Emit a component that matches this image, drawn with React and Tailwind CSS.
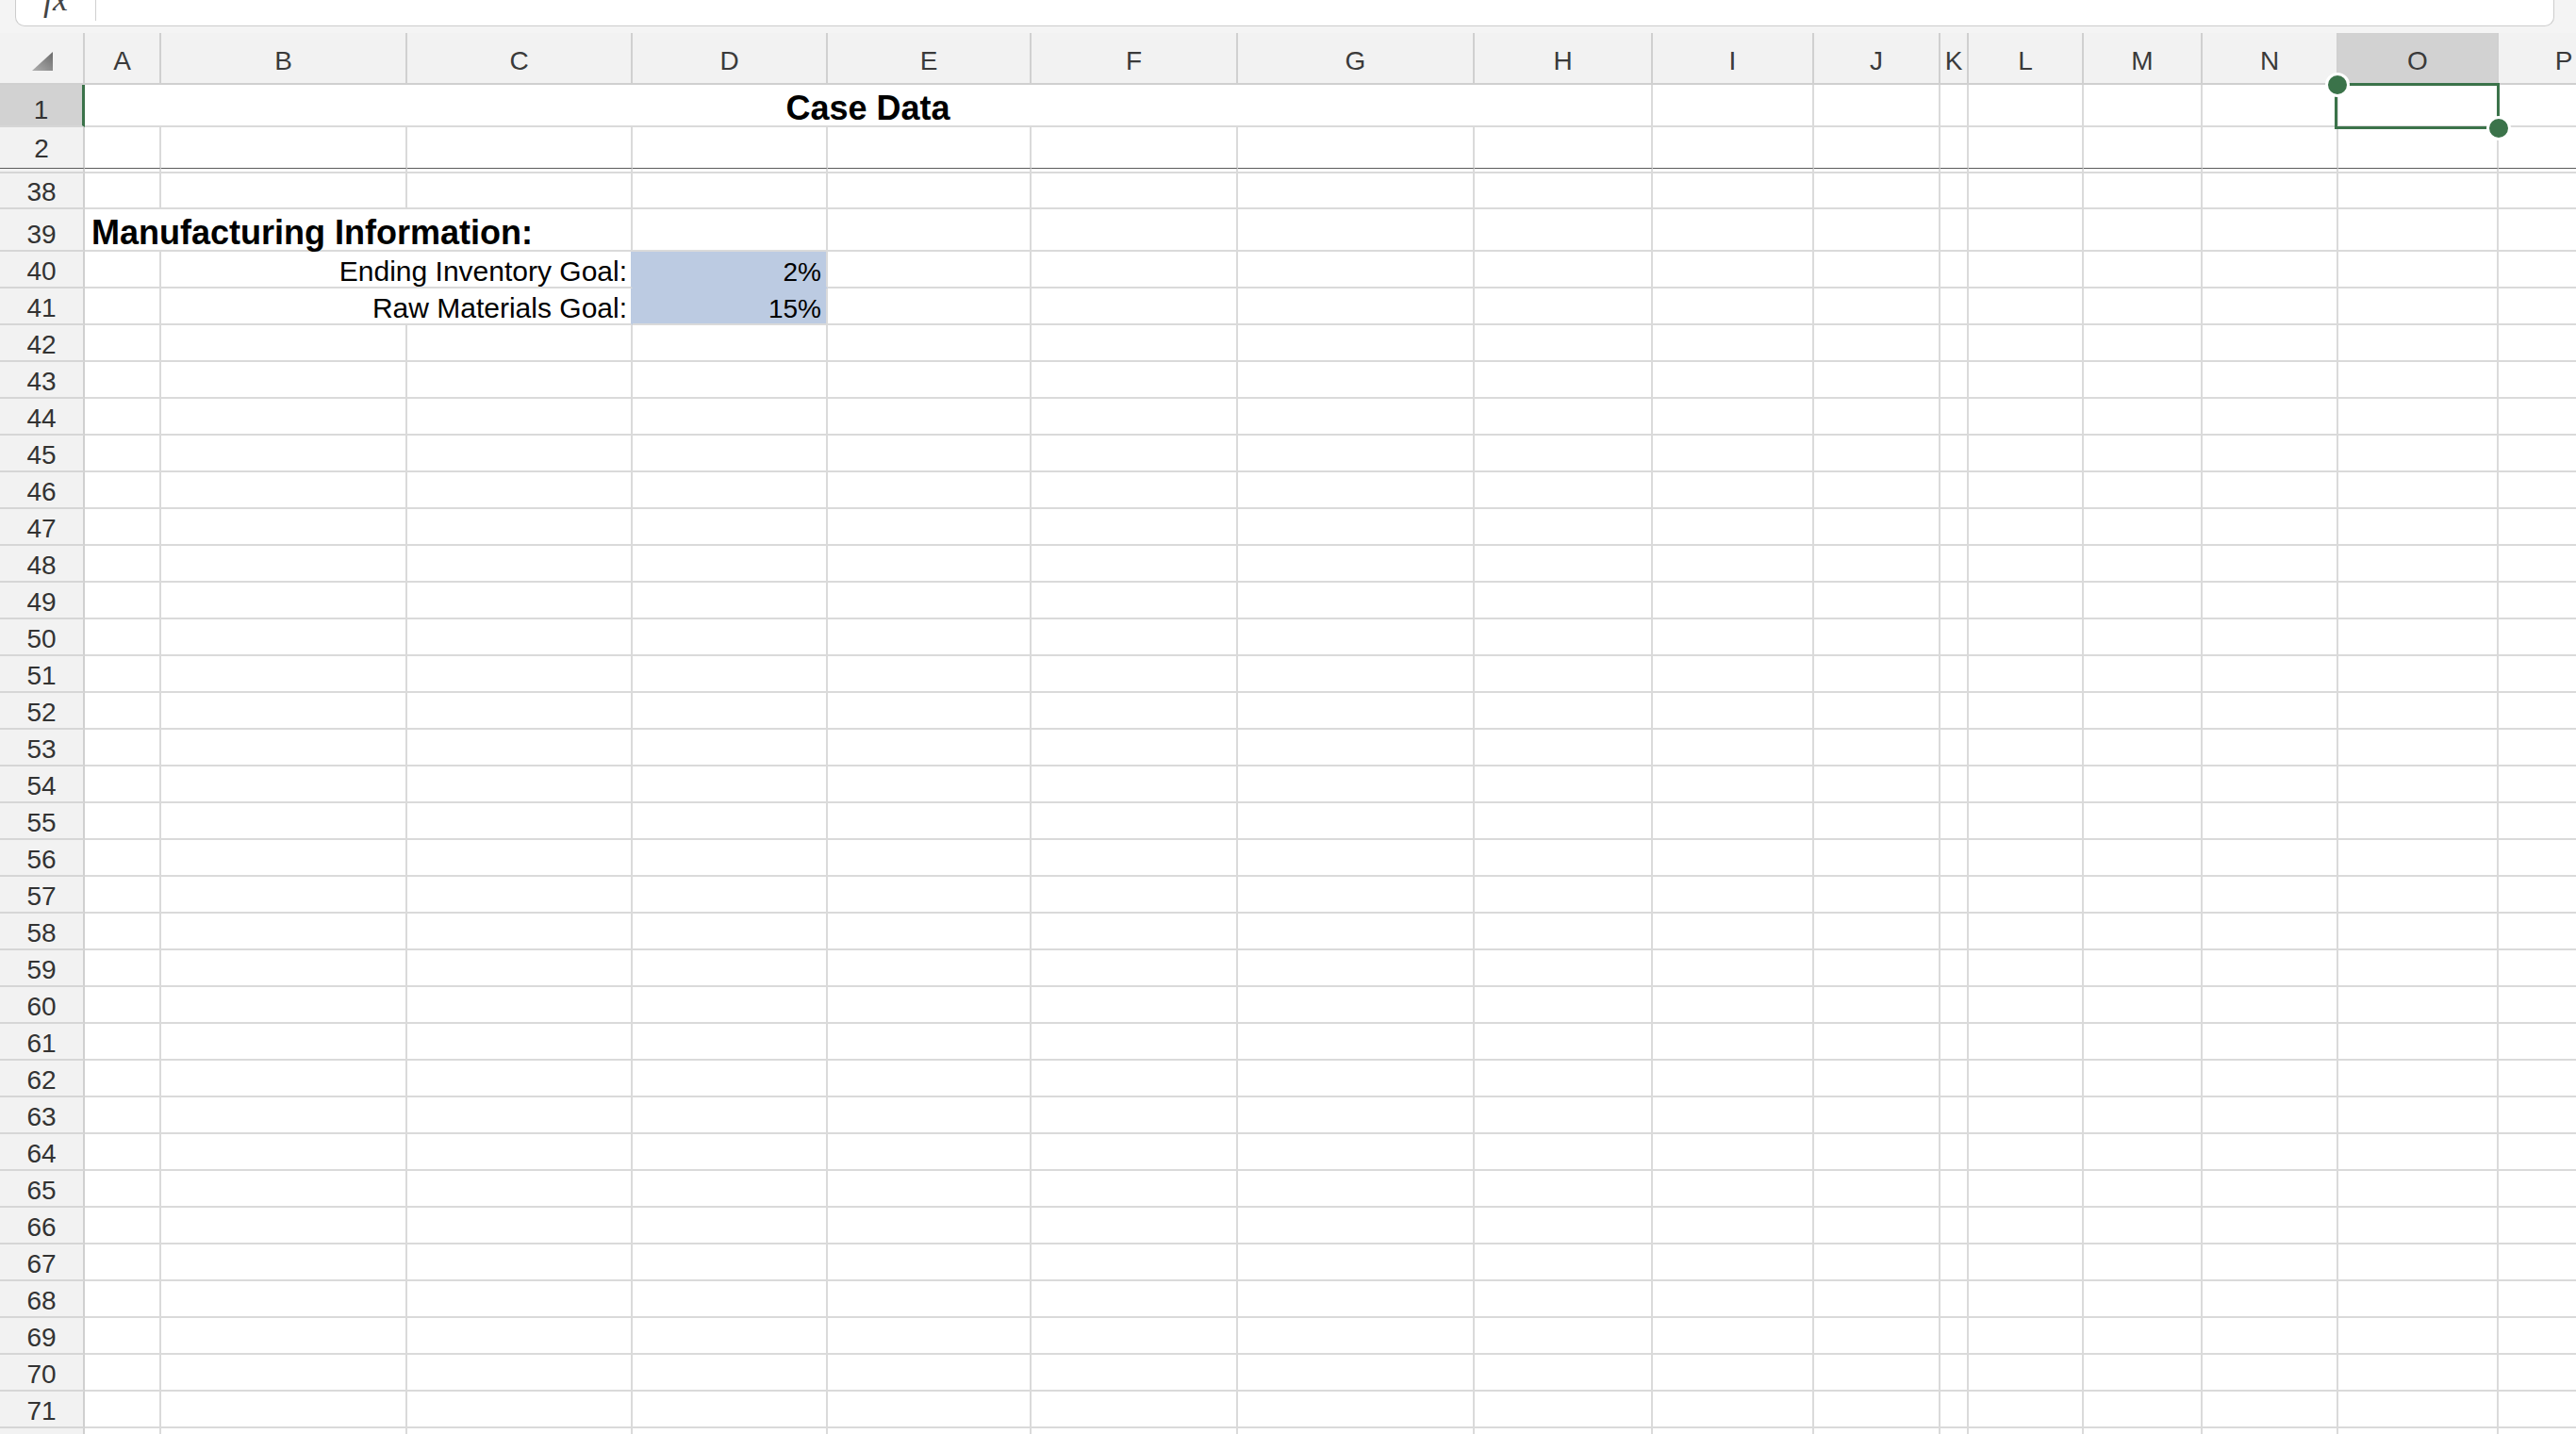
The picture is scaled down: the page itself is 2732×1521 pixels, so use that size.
import React from "react";

const GRID =
  "grid grid-cols-[90px_81px_261px_239px_207px_216px_219px_251px_189px_171px_134px_30px_122px_126px_144px_170px_140px_200px]";
const LETTERS = ["A", "B", "C", "D", "E", "F", "G", "H", "I", "J", "K", "L", "M", "N", "O", "P", "Q"];

function RowHead({ n, active }) {
  return (
    <div
      className={
        active
          ? "flex items-end justify-center pb-[2px] bg-[#d2d2d2] border-b-2 border-b-[#d6d6d6] border-r-[3px] border-r-[#3b734a] text-[28px] leading-none text-[#333333]"
          : "flex items-end justify-center pb-[2px] bg-[#f2f2f2] border-b-2 border-b-[#d6d6d6] border-r-2 border-r-[#d0d0d0] text-[28px] leading-none text-[#333333]"
      }
    >
      {n}
    </div>
  );
}

function Cell({ children }) {
  return <div className="border-r-2 border-b-2 border-[#dadada]">{children}</div>;
}

function EmptyCells({ count }) {
  return Array.from({ length: count }).map((_, i) => <Cell key={i} />);
}

function PlainRow({ n, h }) {
  return (
    <div className={`${GRID} ${h}`}>
      <RowHead n={n} />
      <EmptyCells count={17} />
    </div>
  );
}

export default function App() {
  const lower = [];
  for (let i = 42; i <= 72; i++) lower.push(i);

  return (
    <div className="w-[2732px] h-[1521px] overflow-hidden bg-white font-['Liberation_Sans',Arial,sans-serif] text-black">
      {/* formula bar strip */}
      <div className="h-[35px] bg-[#f4f4f4] pl-[16px] pr-[23px]">
        <div className="h-[28px] bg-white border border-t-0 border-[#cccccc] rounded-b-[10px] flex items-end overflow-hidden">
          <div className="w-[84px] h-full flex items-end justify-center">
            <span className="mb-[10px] text-[36px] leading-none italic font-['Liberation_Serif',serif] text-[#444444]">
              fx
            </span>
          </div>
          <div className="w-px h-[22px] bg-[#d0d0d0] self-start" />
          <div className="flex-1" />
        </div>
      </div>

      {/* column header row */}
      <div className={`${GRID} h-[55px]`}>
        <div className="bg-[#f2f2f2] border-r-2 border-b-2 border-[#d0d0d0] pl-[34px] pt-[20px]">
          <svg width="22" height="20" viewBox="0 0 22 20">
            <defs>
              <linearGradient id="tri" x1="0" y1="1" x2="1" y2="0">
                <stop offset="0" stopColor="#b0b0b0" />
                <stop offset="1" stopColor="#6a6a6a" />
              </linearGradient>
            </defs>
            <polygon points="22,0 22,20 0,20" fill="url(#tri)" />
          </svg>
        </div>
        {LETTERS.map((l) => (
          <div
            key={l}
            className={
              l === "O"
                ? "flex items-end justify-center pb-[9px] bg-[#d2d2d2] border-r-2 border-b-2 border-[#d0d0d0] text-[28px] leading-none text-[#3a3a3a]"
                : "flex items-end justify-center pb-[9px] bg-[#f2f2f2] border-r-2 border-b-2 border-[#d0d0d0] text-[28px] leading-none text-[#3a3a3a]"
            }
          >
            {l}
          </div>
        ))}
      </div>

      {/* row 1 */}
      <div className={`${GRID} h-[45px]`}>
        <RowHead n={1} active />
        <div className="col-span-8 border-r-2 border-b-2 border-[#dadada] flex items-end justify-center">
          <span className="text-[36px] leading-none font-bold">Case Data</span>
        </div>
        <EmptyCells count={6} />
        <div className="relative border-r-2 border-b-2 border-[#dadada]">
          <div className="absolute left-[-4px] top-[-2px] w-[175px] h-[49px] border-[3px] border-[#3b734a]" />
          <div className="absolute left-[-14px] top-[-13px] w-[26px] h-[26px] rounded-full bg-[#3b734a] border-[3px] border-white" />
          <div className="absolute left-[157px] top-[33px] w-[26px] h-[26px] rounded-full bg-[#3b734a] border-[3px] border-white" />
        </div>
        <Cell />
        <Cell />
      </div>

      {/* row 2 (no bottom line; freeze line follows) */}
      <div className={`${GRID} h-[43px]`}>
        <div className="flex items-end justify-center pb-[6px] bg-[#f2f2f2] border-r-2 border-r-[#d0d0d0] text-[28px] leading-none text-[#333333]">
          2
        </div>
        {LETTERS.map((l) => (
          <div key={l} className="border-r-2 border-[#dadada]" />
        ))}
      </div>

      {/* freeze pane divider */}
      <div className={`${GRID} h-[6px]`}>
        <div className="bg-[#f2f2f2] border-t border-t-[#5c5c5c] border-b-2 border-b-[#d6d6d6] border-r-2 border-r-[#d0d0d0]" />
        {LETTERS.map((l) => (
          <div
            key={l}
            className="border-t border-t-[#5c5c5c] border-b-2 border-b-[#dadada] border-r-2 border-r-[#dadada]"
          />
        ))}
      </div>

      <PlainRow n={38} h="h-[38px]" />

      {/* row 39 */}
      <div className={`${GRID} h-[45px]`}>
        <RowHead n={39} />
        <div className="col-span-3 border-r-2 border-b-2 border-[#dadada] flex items-end pl-[7px] pb-[3px]">
          <span className="text-[36px] leading-[30px] font-bold whitespace-nowrap">Manufacturing Information:</span>
        </div>
        <EmptyCells count={14} />
      </div>

      {/* row 40 */}
      <div className={`${GRID} h-[39px]`}>
        <RowHead n={40} />
        <Cell />
        <div className="col-span-2 border-b-2 border-b-[#dadada] border-r-2 border-r-[#bccbe2] flex items-end justify-end pr-[4px] pb-[1px]">
          <span className="text-[30px] leading-none whitespace-nowrap">Ending Inventory Goal:</span>
        </div>
        <div className="bg-[#bccbe2] border-b-2 border-b-[#bccbe2] border-r-2 border-r-[#dadada] flex items-end justify-end pr-[5px] pb-[1px]">
          <span className="text-[28px] leading-none">2%</span>
        </div>
        <EmptyCells count={13} />
      </div>

      {/* row 41 */}
      <div className={`${GRID} h-[39px]`}>
        <RowHead n={41} />
        <Cell />
        <div className="col-span-2 border-b-2 border-b-[#dadada] border-r-2 border-r-[#bccbe2] flex items-end justify-end pr-[4px] pb-[1px]">
          <span className="text-[30px] leading-none whitespace-nowrap">Raw Materials Goal:</span>
        </div>
        <div className="bg-[#bccbe2] border-b-2 border-b-[#dadada] border-r-2 border-r-[#dadada] flex items-end justify-end pr-[5px] pb-[1px]">
          <span className="text-[28px] leading-none">15%</span>
        </div>
        <EmptyCells count={13} />
      </div>

      {lower.map((n) => (
        <PlainRow key={n} n={n} h="h-[39px]" />
      ))}
    </div>
  );
}
